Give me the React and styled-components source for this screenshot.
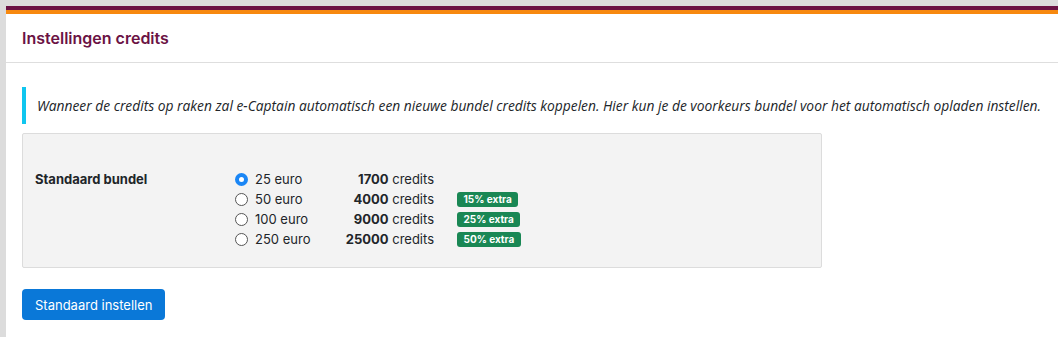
import styled, { createGlobalStyle } from "styled-components";

const GlobalStyle = createGlobalStyle`
  html, body {
    margin: 0;
    padding: 0;
    background: #dcdcdc;
    font-family: Inter, "Liberation Sans", sans-serif;
    color: #212529;
  }
`;

const Page = styled.div`
  padding: 6px 0 0 6px;
  height: 100vh;
  box-sizing: border-box;
  display: flex;
  flex-direction: column;
`;

const Card = styled.div`
  flex: 1;
  background: #fff;
  border-top: 4px solid #6b1244;
`;

const Stripe = styled.div`
  height: 4px;
  background: #f7890f;
`;

const CardHeader = styled.div`
  height: 49px;
  box-sizing: border-box;
  border-bottom: 1px solid #dedede;
  display: flex;
  align-items: center;
  padding: 0 16px;
`;

const Title = styled.h1`
  margin: 0;
  font-size: 16px;
  font-weight: 600;
  color: #6b1244;
`;

const Body = styled.div`
  padding: 24px 16px 16px 16px;
`;

const Info = styled.div`
  border-left: 4px solid #10c6ef;
  height: 37px;
  display: flex;
  align-items: center;
  padding-left: 11px;
  font-family: "Open Sans", Lato, sans-serif;
  font-style: italic;
  font-size: 13.8px;
  color: #212529;
  white-space: nowrap;
`;

const Panel = styled.div`
  margin-top: 9px;
  width: 800px;
  height: 135px;
  box-sizing: border-box;
  background: #f3f3f3;
  border: 1px solid #dcdcdc;
  border-radius: 2px;
  display: flex;
  padding: 35px 12px 0 12px;
`;

const FieldLabel = styled.div`
  width: 200px;
  font-size: 13px;
  font-weight: 700;
  line-height: 20px;
  color: #212529;
`;

const Options = styled.div`
  display: flex;
  flex-direction: column;
`;

const Option = styled.label`
  display: grid;
  grid-template-columns: 20px 80px 99px 70px;
  align-items: center;
  height: 20px;
  font-size: 13px;
  color: #212529;
`;

const Radio = styled.span`
  width: 13px;
  height: 13px;
  border-radius: 50%;
  box-sizing: border-box;
  border: ${(p) => (p.checked ? "4px solid #1a86f5" : "1px solid #555")};
  background: #fff;
`;

const Credits = styled.span`
  text-align: right;
  b {
    font-weight: 700;
  }
`;

const Badge = styled.span`
  justify-self: start;
  margin-left: 23px;
  background: #198754;
  color: #fff;
  font-size: 10px;
  font-weight: 700;
  line-height: 15px;
  padding: 0 6.5px;
  border-radius: 3px;
  white-space: nowrap;
`;

const Button = styled.button`
  margin-top: 21px;
  background: #0a78d8;
  color: #fff;
  border: none;
  border-radius: 4px;
  height: 31px;
  padding: 0 13px;
  font-family: Inter, "Liberation Sans", sans-serif;
  font-size: 13px;
  cursor: pointer;
`;

const bundles = [
  { euro: 25, credits: 1700, extra: null, checked: true },
  { euro: 50, credits: 4000, extra: "15% extra" },
  { euro: 100, credits: 9000, extra: "25% extra" },
  { euro: 250, credits: 25000, extra: "50% extra" },
];

export default function App() {
  return (
    <>
      <GlobalStyle />
      <Page>
        <Card>
          <Stripe />
          <CardHeader>
            <Title>Instellingen credits</Title>
          </CardHeader>
          <Body>
            <Info>
              Wanneer de credits op raken zal e-Captain automatisch een nieuwe bundel credits koppelen. Hier kun je de voorkeurs bundel voor het automatisch opladen instellen.
            </Info>
            <Panel>
              <FieldLabel>Standaard bundel</FieldLabel>
              <Options>
                {bundles.map((b) => (
                  <Option key={b.euro}>
                    <Radio checked={b.checked} />
                    <span>{b.euro} euro</span>
                    <Credits>
                      <b>{b.credits}</b> credits
                    </Credits>
                    {b.extra ? <Badge>{b.extra}</Badge> : <span />}
                  </Option>
                ))}
              </Options>
            </Panel>
            <Button>Standaard instellen</Button>
          </Body>
        </Card>
      </Page>
    </>
  );
}
